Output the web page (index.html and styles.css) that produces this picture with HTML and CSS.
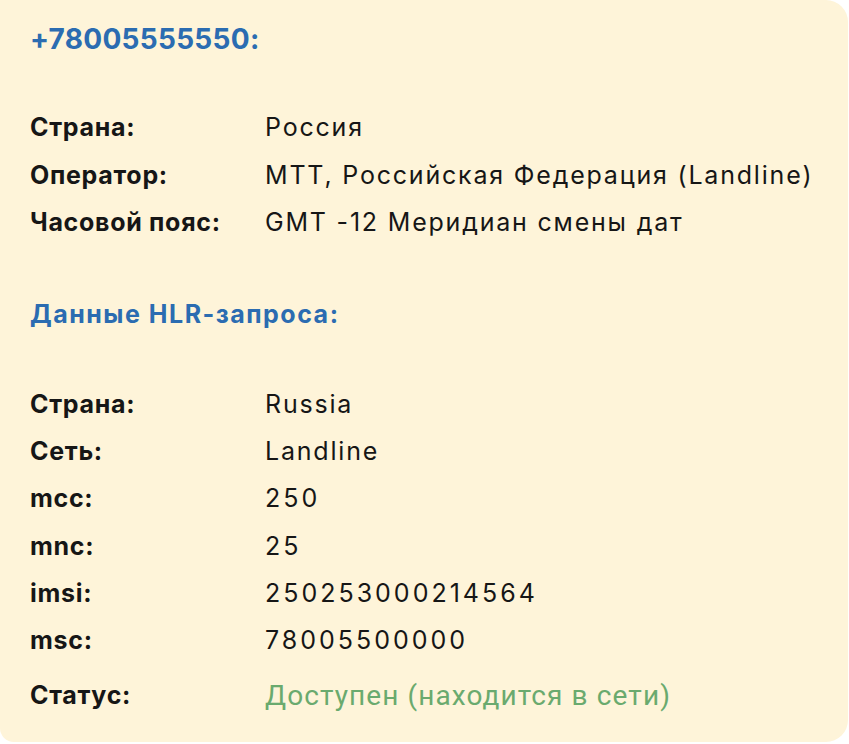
FILE: index.html
```html
<!DOCTYPE html>
<html lang="ru">
<head>
<meta charset="utf-8">
<title>HLR</title>
<link rel="stylesheet" href="styles.css">
</head>
<body>
<div class="card">
  <h1 class="phone">+78005555550:</h1>
  <div class="info info-main">
    <div class="label">Страна:</div><div class="value">Россия</div>
    <div class="label">Оператор:</div><div class="value">MTT, Российская Федерация (Landline)</div>
    <div class="label">Часовой пояс:</div><div class="value">GMT -12 Меридиан смены дат</div>
  </div>
  <h2 class="section">Данные HLR-запроса:</h2>
  <div class="info">
    <div class="label">Страна:</div><div class="value">Russia</div>
    <div class="label">Сеть:</div><div class="value">Landline</div>
    <div class="label">mcc:</div><div class="value num">250</div>
    <div class="label">mnc:</div><div class="value num">25</div>
    <div class="label">imsi:</div><div class="value num">250253000214564</div>
    <div class="label">msc:</div><div class="value num">78005500000</div>
    <div class="label status-label">Статус:</div><div class="value status">Доступен (находится в сети)</div>
  </div>
</div>
</body>
</html>
```
FILE: styles.css
```css
* { box-sizing: border-box; }
html, body { margin: 0; padding: 0; background: #ffffff; }
body { font-family: "Inter", "Noto Sans", sans-serif; color: #161616; }
.card {
  width: 848px;
  height: 742px;
  background: #fef4d9;
  border-radius: 0 22px 22px 14px;
  padding: 16px 0 0 30px;
}
.phone {
  margin: 0 0 41px 0;
  font-size: 28px;
  line-height: 47px;
  font-weight: 700;
  letter-spacing: 0.3px;
  color: #2b6cb1;
}
.section {
  margin: 44px 0 43px 0;
  font-size: 25px;
  line-height: 47px;
  font-weight: 700;
  letter-spacing: 1.5px;
  color: #2b6cb1;
}
.info {
  display: grid;
  grid-template-columns: 235px 1fr;
  grid-auto-rows: 47.3px;
  align-items: center;
}
.info-main { grid-auto-rows: 47.5px; }
.label { font-size: 25px; font-weight: 700; line-height: 47px; letter-spacing: 0.7px; }
.value { font-size: 25px; font-weight: 400; line-height: 47px; letter-spacing: 1.8px; }
.value.num { letter-spacing: 3px; }
.status-label, .status { margin-top: 16px; }
.status { font-family: "Roboto", sans-serif; color: #6aaa6e; font-size: 28px; letter-spacing: 1.1px; }
```
